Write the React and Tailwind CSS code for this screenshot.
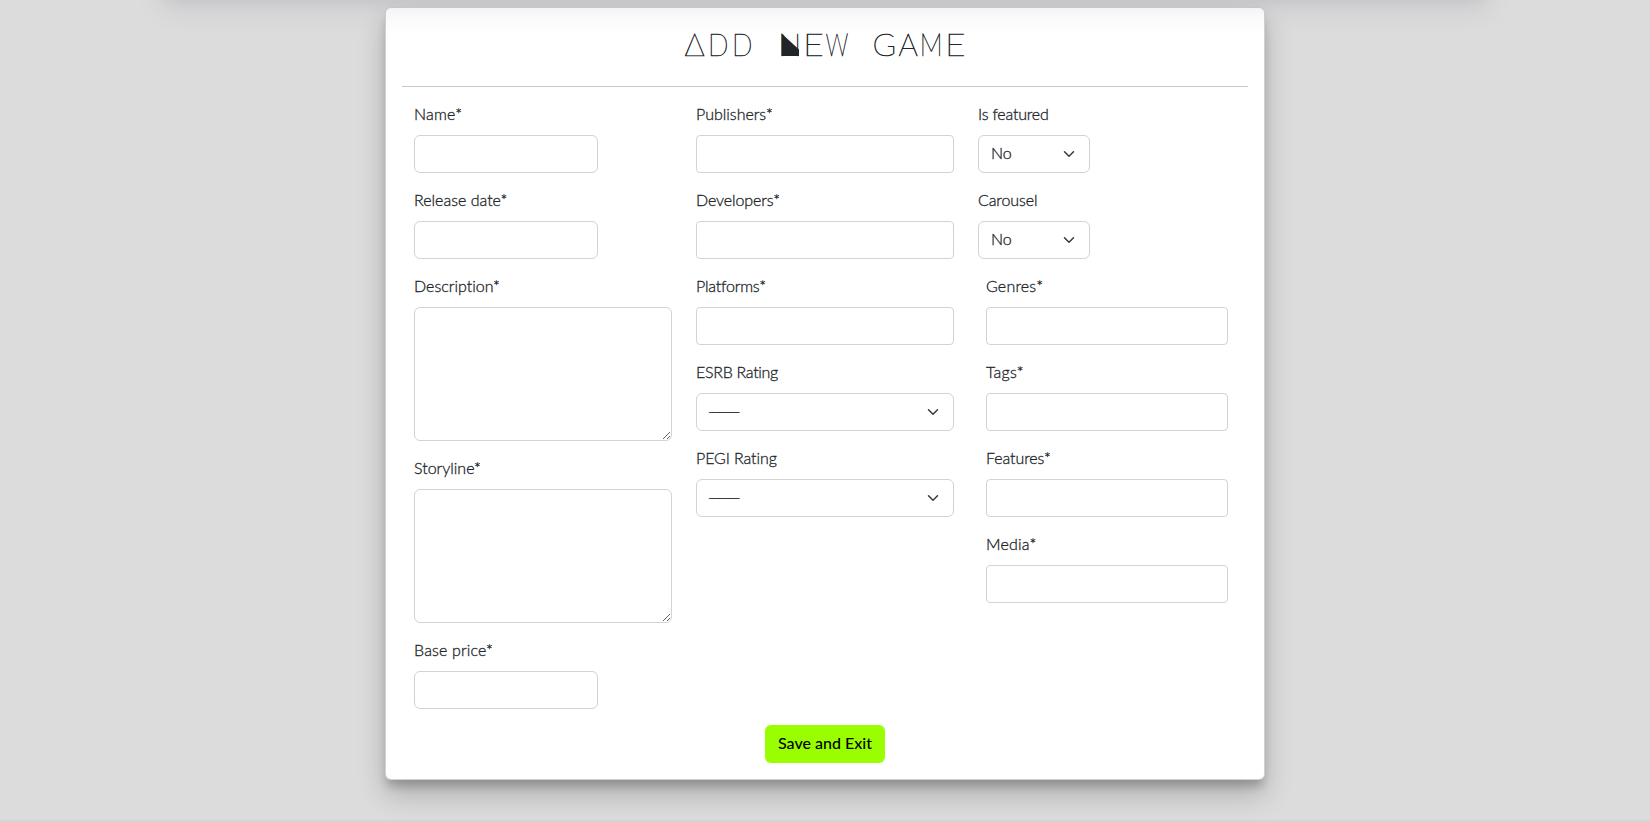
import React from "react";

const boxBase =
  "block border border-[#ced4da] bg-white text-[#212529] outline-none";

function Field({ label, spacing = "tracking-normal", children }) {
  return (
    <div className="mb-4">
      <label className={`mb-2 block h-6 whitespace-nowrap leading-[21px] ${spacing}`}>
        {label}
      </label>
      {children}
    </div>
  );
}

function Input({ className = "w-full rounded" }) {
  return <input type="text" className={`${boxBase} h-[38px] px-3 ${className}`} />;
}

function Area() {
  return <textarea className={`${boxBase} h-[134px] w-full resize rounded-md px-3 py-1.5`} />;
}

function Select({ value, className = "w-full" }) {
  return (
    <div
      className={`${boxBase} flex h-[38px] items-center justify-between rounded-md px-3 ${className}`}
    >
      <span className="-mt-0.5 leading-6">{value}</span>
      <svg viewBox="0 0 16 16" className="h-3 w-4" fill="none" stroke="#343a40" strokeWidth="2" strokeLinecap="round" strokeLinejoin="round">
        <path d="m2 5 6 6 6-6" />
      </svg>
    </div>
  );
}

const dashes = <span className="-ml-px tracking-[-2.6px]">---------</span>;

function Glyph({ children, scale = "" }) {
  return (
    <span className="relative flex w-[23.7px] justify-center">
      <span className={`inline-block ${scale}`}>{children}</span>
    </span>
  );
}

export default function App() {
  return (
    <div className="relative h-[822px] overflow-hidden bg-[#dcdcdc] pt-[7px] font-['Lato','Liberation_Sans',sans-serif] text-base font-light text-[#212529] [-webkit-text-stroke:0.3px_#212529] [font-variant-ligatures:none]">
      <form className="mx-auto h-[773px] w-[880px] rounded-md border border-black/[0.175] bg-white p-4 shadow-[0_14px_28px_rgba(0,0,0,0.22),0_8px_10px_-2px_rgba(0,0,0,0.2)]">
        <h1 className="flex h-[63px] items-start justify-center border-b border-[#c8c9ca] text-[32px] font-thin leading-[40px] [-webkit-text-stroke:0.7px_#212529]">
          <Glyph>Δ</Glyph>
          <Glyph scale="scale-x-[0.84]">D</Glyph>
          <Glyph scale="scale-x-[0.84]">D</Glyph>
          <Glyph> </Glyph>
          <Glyph scale="scale-x-[0.95]">
            N
            <i className="absolute left-[2.5px] top-[9px] h-[23px] w-[19px] bg-[#212529] [clip-path:polygon(0_0,100%_72%,100%_100%,0_100%)]" />
          </Glyph>
          <Glyph scale="scale-x-[1.12]">E</Glyph>
          <Glyph scale="scale-x-[0.7]">W</Glyph>
          <Glyph> </Glyph>
          <Glyph>G</Glyph>
          <Glyph scale="scale-x-[0.95]">A</Glyph>
          <Glyph scale="scale-x-[0.8]">M</Glyph>
          <Glyph scale="scale-x-[1.1]">E</Glyph>
        </h1>
        <div className="flex gap-6 px-3 pt-4">
          <div className="w-[258px]">
            <Field label="Name*" spacing="tracking-[0.2px]"><Input className="w-[184px] rounded-md" /></Field>
            <Field label="Release date*"><Input className="w-[184px] rounded-md" /></Field>
            <Field label="Description*"><Area /></Field>
            <Field label="Storyline*"><Area /></Field>
            <Field label="Base price*" spacing="tracking-[0.15px]"><Input className="w-[184px] rounded-md" /></Field>
          </div>
          <div className="w-[258px]">
            <Field label="Publishers*"><Input /></Field>
            <Field label="Developers*" spacing="tracking-[-0.1px]"><Input /></Field>
            <Field label="Platforms*" spacing="tracking-[-0.2px]"><Input /></Field>
            <Field label="ESRB Rating" spacing="tracking-[-0.3px]"><Select value={dashes} /></Field>
            <Field label="PEGI Rating" spacing="tracking-[-0.1px]"><Select value={dashes} /></Field>
          </div>
          <div className="w-[258px]">
            <Field label="Is featured" spacing="tracking-[-0.2px]"><Select value="No" className="w-[112px]" /></Field>
            <Field label="Carousel" spacing="tracking-[-0.1px]"><Select value="No" className="w-[112px]" /></Field>
            <div className="px-2">
              <Field label="Genres*" spacing="tracking-[0.2px]"><Input /></Field>
              <Field label="Tags*" spacing="tracking-[0.2px]"><Input /></Field>
              <Field label="Features*" spacing="tracking-[-0.1px]"><Input /></Field>
              <Field label="Media*" spacing="tracking-[0.2px]"><Input /></Field>
            </div>
          </div>
        </div>
        <div className="flex justify-center">
          <button type="button" className="h-[38px] w-[120px] whitespace-nowrap rounded-md bg-[#99ff00] pb-[3px] font-medium text-black [-webkit-text-stroke:0px]">
            Save and Exit
          </button>
        </div>
      </form>
      <div className="pointer-events-none absolute inset-x-[158px] -top-[100px] h-[100px] shadow-[0_13px_27px_-5px_rgba(50,50,93,0.10),0_8px_16px_-8px_rgba(0,0,0,0.06)]" />
      <div className="pointer-events-none absolute inset-x-0 bottom-0 h-[3px] bg-gradient-to-b from-transparent to-black/5" />
    </div>
  );
}
